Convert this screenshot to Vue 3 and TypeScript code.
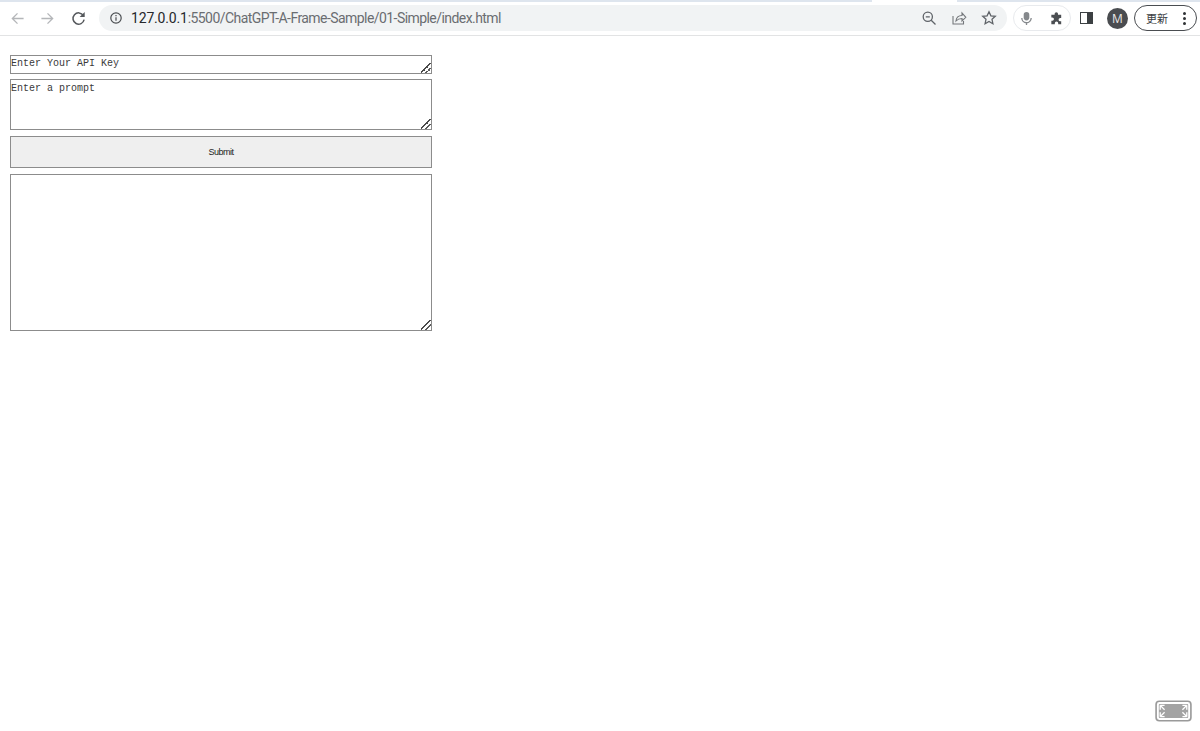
<script setup lang="ts">
const url = { host: '127.0.0.1', rest: ':5500/ChatGPT-A-Frame-Sample/01-Simple/index.html' }
</script>

<template>
  <div class="page">
    <header class="chrome">
      <div class="tabline"><span class="strip left"></span><span class="strip right"></span></div>
      <div class="bar">
        <svg class="nav back" viewBox="0 0 16 16"><path d="M14.5 8H2.5M8 2.5 2.5 8 8 13.5" /></svg>
        <svg class="nav fwd" viewBox="0 0 16 16"><path d="M1.5 8h12M8 2.5 13.5 8 8 13.5" /></svg>
        <svg class="reload" viewBox="0 0 16 16"><path d="M13.200 4.800A6 6 0 1 0 14 9.200" /><path class="solid" d="M14.600 1v5.400H9.200z" /></svg>
        <div class="omnibox">
          <svg class="info" viewBox="0 0 14 14"><circle cx="7" cy="7" r="5.200" /><path d="M7 6.200v3.600M7 4v1.200" /></svg>
          <div class="url"><span class="host">{{ url.host }}</span><span class="rest">{{ url.rest }}</span></div>
          <div class="omni-actions">
            <svg class="tool" viewBox="0 0 16 16"><circle cx="6.800" cy="6.800" r="4.600" /><path d="M4.800 6.800h4M10.200 10.200l4.300 4.300" /></svg>
            <svg class="tool thin" viewBox="0 0 16 16"><path d="M2 6v8h10.500v-3" /><path d="M5 11c.3-3.600 3-5.500 6-5.500V3l3.800 4.300L11 11V8.500c-2.500 0-4.500.8-6 2.500z" /></svg>
            <svg class="tool" viewBox="0 0 16 16"><path d="M8 1.800l1.900 4 4.400.5-3.300 3 .9 4.400L8 11.500l-3.900 2.200.9-4.400-3.300-3 4.400-.5z" /></svg>
          </div>
        </div>
        <div class="ext-pill">
          <svg class="mic" viewBox="0 0 16 16"><rect x="5" y="1" width="6" height="9" rx="3" /><path class="line" d="M3 7.500a5 5 0 0 0 10 0M8 12.500V15" /></svg>
          <svg class="puzzle" viewBox="0 0 16 16"><path d="M6 3a1.800 1.800 0 0 1 3.600 0v1H13v3.400h-1a1.800 1.800 0 0 0 0 3.600h1v3H9.800v-1a1.800 1.800 0 0 0-3.600 0v1H2.500v-3.600h1a1.800 1.800 0 0 0 0-3.600h-1V4H6z" /></svg>
        </div>
        <div class="sidepanel"><span></span></div>
        <div class="avatar">M</div>
        <div class="update">
          <span class="update-label">更新</span>
          <span class="dots"><i></i><i></i><i></i></span>
        </div>
      </div>
    </header>

    <main class="form">
      <textarea class="field key" placeholder="Enter Your API Key"></textarea>
      <textarea class="field prompt" placeholder="Enter a prompt"></textarea>
      <button class="submit" type="button">Submit</button>
      <textarea class="field output"></textarea>
    </main>

    <div class="fullscreen">
      <svg viewBox="0 0 34 20">
        <rect class="outer" x="1" y="1" width="32" height="18" rx="3" />
        <rect class="inner" x="3.500" y="3.500" width="27" height="13" rx="1" />
        <path class="arrows" d="M4.800 4.800l4 4M4.800 4.800h4M4.800 4.800v4M29.200 4.800l-4 4M29.200 4.800h-4M29.200 4.800v4M4.800 15.200l4-4M4.800 15.200h4M4.800 15.200v-4M29.200 15.200l-4-4M29.200 15.200h-4M29.200 15.200v-4" />
      </svg>
    </div>
  </div>
</template>

<style>
html, body { margin: 0; background: #fff; }
</style>

<style scoped>
.page {
  position: relative;
  width: 1200px;
  height: 731px;
  overflow: hidden;
  background: #fff;
  font-family: "Open Sans", "Noto Sans", sans-serif;
}
.chrome { height: 35px; border-bottom: 1px solid #e2e3e4; }
.tabline { display: flex; justify-content: space-between; height: 2px; }
.strip { display: block; height: 2px; background: #dee5ee; }
.left { width: 872px; }
.right { width: 243px; }
.bar {
  display: flex;
  align-items: center;
  height: 30px;
  padding: 1px 3px 0 10px;
}
svg { display: block; flex: none; fill: none; }
.nav { width: 15px; height: 15px; stroke: #b4b6b9; stroke-width: 1.400; }
.fwd { margin-left: 15px; }
.reload { width: 15px; height: 15px; margin-left: 16px; stroke: #55585c; stroke-width: 1.600; }
.reload .solid { fill: #55585c; stroke: none; }
.omnibox {
  display: flex;
  align-items: center;
  width: 908px;
  height: 26px;
  margin-left: 13px;
  padding-left: 10px;
  box-sizing: border-box;
  border-radius: 13px;
  background: #f1f3f4;
}
.info { width: 14px; height: 14px; stroke: #4a4d51; stroke-width: 1.200; }
.url {
  margin-left: 8px;
  font-family: "Roboto", "Open Sans", sans-serif;
  font-size: 14px;
  white-space: nowrap;
}
.host { color: #26282b; letter-spacing: -0.180px; }
.rest { color: #6a6d71; letter-spacing: -0.560px; }
.omni-actions { display: flex; align-items: center; gap: 14px; margin-left: auto; margin-right: 10px; }
.tool { width: 16px; height: 16px; stroke: #5f6368; stroke-width: 1.300; }
.thin { stroke: #74777b; stroke-width: 1.100; }
.ext-pill {
  display: flex;
  align-items: center;
  gap: 15px;
  height: 24px;
  margin-left: 6px;
  padding: 0 6px 0 5px;
  border: 1px solid #e8eaed;
  border-radius: 13px;
}
.mic { width: 15px; height: 17px; fill: #85888c; }
.mic .line { fill: none; stroke: #85888c; stroke-width: 1.400; }
.puzzle { width: 15px; height: 15px; fill: #4b4e52; }
.sidepanel {
  display: flex;
  justify-content: flex-end;
  width: 13px;
  height: 12px;
  margin-left: 9px;
  border: 1.500px solid #3c4043;
  box-sizing: border-box;
}
.sidepanel span { width: 5px; background: #3c4043; }
.avatar {
  width: 21px;
  height: 21px;
  margin-left: 14px;
  border-radius: 50%;
  background: #4a4c50;
  color: #e8e8e8;
  font-size: 12px;
  line-height: 21px;
  text-align: center;
}
.update {
  display: flex;
  align-items: center;
  justify-content: space-between;
  box-sizing: border-box;
  width: 63px;
  height: 26px;
  margin-left: 6px;
  padding: 0 10px 0 11px;
  border: 1px solid #4a4d51;
  border-radius: 13px;
}
.update-label { font: 11px "Noto Sans CJK JP", sans-serif; color: #3c4043; }
.dots { display: flex; flex-direction: column; gap: 2px; }
.dots i { width: 3px; height: 3px; border-radius: 50%; background: #2f3235; }

.form {
  display: flex;
  flex-direction: column;
  width: 422px;
  margin: 19px 0 0 10px;
}
.field {
  display: block;
  box-sizing: border-box;
  width: 100%;
  margin: 0;
  padding: 2px 0;
  border: 1px solid #8c8c8c;
  border-radius: 0;
  background: #fff;
  color: #333;
  font: 10px/12px "Liberation Mono", monospace;
  outline: none;
}
.field::placeholder { color: #3a3a3a; opacity: 1; }
.field::-webkit-resizer {
  background-image: linear-gradient(135deg, transparent 44%, #4a4a4a 44%, #4a4a4a 55%, transparent 55%, transparent 70%, #5a5a5a 70%, #5a5a5a 80%, transparent 80%);
  background-size: 10px 10px;
  background-position: right bottom;
  background-repeat: no-repeat;
}
.key { height: 19px; }
.prompt { height: 51px; margin-top: 5px; padding-top: 3px; }
.output { height: 157px; margin-top: 6px; }
.submit {
  display: block;
  box-sizing: border-box;
  width: 100%;
  height: 32px;
  margin: 6px 0 0;
  padding: 0;
  border: 1px solid #8c8c8c;
  border-radius: 0;
  background: #efefef;
  color: #222;
  font: 9px "Liberation Sans", sans-serif;
  letter-spacing: -0.480px;
}
.fullscreen { position: absolute; left: 1155px; top: 700px; width: 37px; height: 22px; }
.fullscreen svg { width: 37px; height: 22px; }
.outer { fill: #fff; stroke: #9a9a9a; stroke-width: 1.500; }
.inner { fill: #a3a3a3; }
.arrows { stroke: #fff; stroke-width: 1.200; }
</style>
